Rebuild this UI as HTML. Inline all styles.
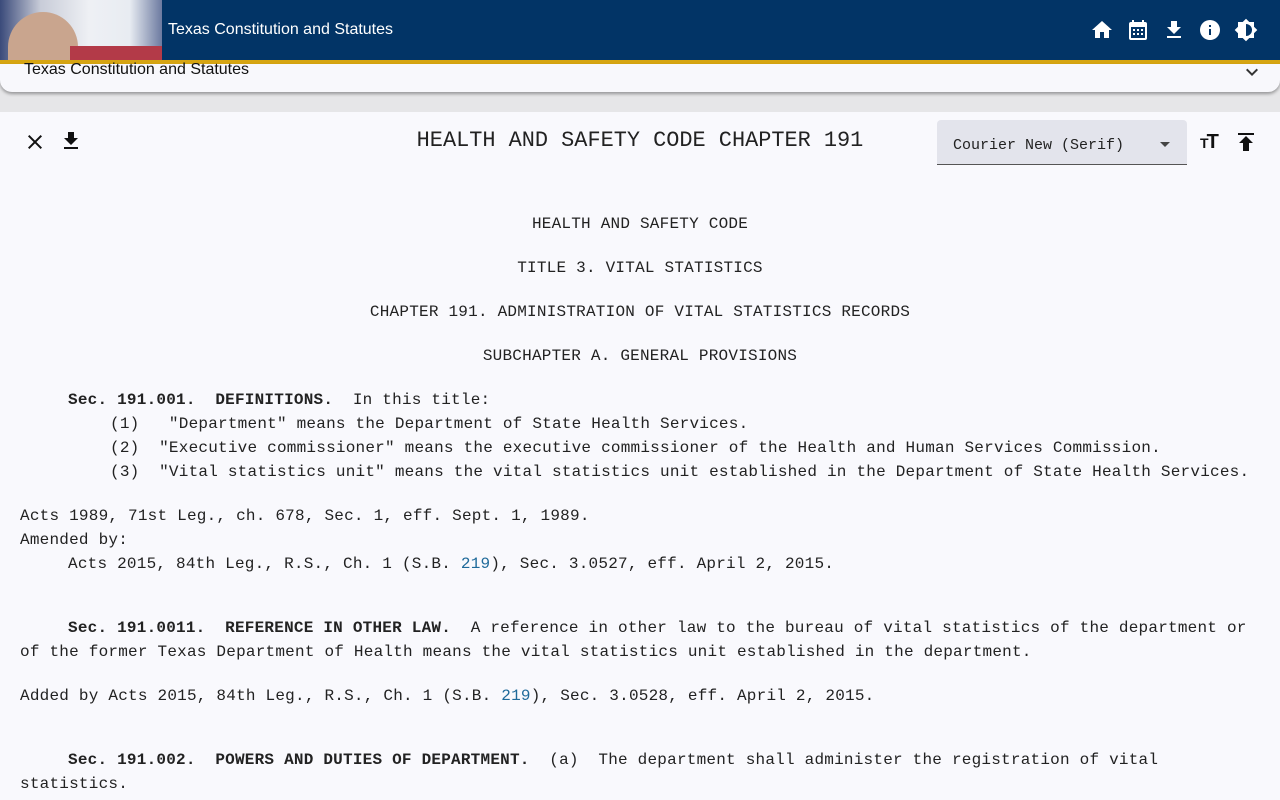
<!DOCTYPE html>
<html><head><meta charset="utf-8"><style>
*{margin:0;padding:0;box-sizing:border-box}
body{width:1280px;height:800px;overflow:hidden;background:#e6e6e8;font-family:"Liberation Sans",sans-serif;position:relative}
.hdr{position:absolute;left:0;top:0;width:1280px;height:60px;background:#023466}
.gold{position:absolute;left:0;top:60px;width:1280px;height:4px;background:#d6a512}
.img{position:absolute;left:0;top:0;width:162px;height:60px;background:linear-gradient(90deg,#3a4a7a 0,#c8ccd8 25%,#eef0f4 55%,#e8ecf2 80%,#6c7aa0 100%);overflow:hidden}
.dome{position:absolute;left:8px;top:12px;width:70px;height:60px;border-radius:35px 35px 0 0;background:#c9a58e}
.flagred{position:absolute;left:70px;top:46px;width:92px;height:14px;background:#b33a48}
.title{position:absolute;left:168px;top:21px;color:#fff;font-size:16px}
.card{position:absolute;left:0;top:64px;width:1280px;height:28px;background:#f8f8fc;border-radius:0 0 12px 12px;box-shadow:0 2px 3px rgba(0,0,0,.35)}
.card span{position:absolute;left:24px;top:-3px;font-size:16px;color:#111}
.main{position:absolute;left:0;top:112px;width:1280px;height:688px;background:#f9f9fd}
.t{position:absolute;font-family:"Courier New","Liberation Mono",monospace;font-size:16px;letter-spacing:0.22px;color:#222;white-space:pre;line-height:24px}
.c{left:0;width:1280px;text-align:center}
b{font-weight:bold}
a{color:#1f6a9a;text-decoration:none}
.sel{position:absolute;left:937px;top:120px;width:250px;height:45px;background:#e3e4ec;border-bottom:1px solid #555;border-radius:4px 4px 0 0}
.sel span{position:absolute;left:16px;top:17px;font-family:"Courier New","Liberation Mono",monospace;font-size:15px;color:#222}
svg{position:absolute}
</style></head><body>
<div class="hdr"></div>
<div class="img"><div class="dome"></div><div class="flagred"></div></div>
<div class="title">Texas Constitution and Statutes</div>
<svg style="left:1090px;top:18px" width="24" height="24" viewBox="0 0 24 24"><path fill="#fff" d="M10 20v-6h4v6h5v-8h3L12 3 2 12h3v8z"/></svg>
<svg style="left:1126px;top:18px" width="24" height="24" viewBox="0 0 24 24"><path fill="#fff" d="M19 4h-1V2h-2v2H8V2H6v2H5a2 2 0 0 0-2 2v14a2 2 0 0 0 2 2h14a2 2 0 0 0 2-2V6a2 2 0 0 0-2-2zm0 16H5V9h14zM7 11h2v2H7zm4 0h2v2h-2zm4 0h2v2h-2zM7 15h2v2H7zm4 0h2v2h-2zm4 0h2v2h-2z"/></svg>
<svg style="left:1162px;top:18px" width="24" height="24" viewBox="0 0 24 24"><path fill="#fff" d="M19 9h-4V3H9v6H5l7 7 7-7zM5 18v2h14v-2z"/></svg>
<svg style="left:1198px;top:18px" width="24" height="24" viewBox="0 0 24 24"><path fill="#fff" d="M12 2a10 10 0 1 0 0 20 10 10 0 0 0 0-20zm1 15h-2v-6h2zm0-8h-2V7h2z"/></svg>
<svg style="left:1234px;top:18px" width="24" height="24" viewBox="0 0 24 24"><path fill="#fff" d="M20 8.69V4h-4.69L12 .69 8.69 4H4v4.69L.69 12 4 15.31V20h4.69L12 23.31 15.31 20H20v-4.69L23.31 12 20 8.69zM12 18V6a6 6 0 0 1 0 12z"/></svg>
<div class="gold"></div>
<div class="card"><span>Texas Constitution and Statutes</span>
<svg style="left:1240px;top:-4px" width="24" height="24" viewBox="0 0 24 24"><path fill="#333" d="M7.4 8.6 12 13.2l4.6-4.6L18 10l-6 6-6-6z"/></svg></div>
<div class="main"></div>
<svg style="left:23px;top:130px" width="24" height="24" viewBox="0 0 24 24"><path fill="#111" d="M19 6.4 17.6 5 12 10.6 6.4 5 5 6.4 10.6 12 5 17.6 6.4 19 12 13.4 17.6 19 19 17.6 13.4 12z"/></svg>
<svg style="left:59px;top:129px" width="24" height="24" viewBox="0 0 24 24"><path fill="#111" d="M19 9h-4V3H9v6H5l7 7 7-7zM5 18v2h14v-2z"/></svg>
<div class="t c" style="top:128px;font-size:21.9px;line-height:26px;letter-spacing:0">HEALTH AND SAFETY CODE CHAPTER 191</div>
<div class="sel"><span>Courier New (Serif)</span>
<svg style="left:222px;top:19px" width="12" height="12" viewBox="0 0 12 12"><path fill="#444" d="M1 3h10L6 8z"/></svg></div>
<div style="position:absolute;left:1200px;top:131px;font:bold 20px 'Liberation Sans',sans-serif;color:#111;letter-spacing:-2px"><span style="font-size:14px">T</span>T</div>
<svg style="left:1234px;top:130px" width="24" height="24" viewBox="0 0 24 24"><path fill="#111" d="M4 3h16v2H4zm8 3-7 7h4v8h6v-8h4z"/></svg>
<div class="t c" style="top:212px">HEALTH AND SAFETY CODE</div>
<div class="t c" style="top:256px">TITLE 3. VITAL STATISTICS</div>
<div class="t c" style="top:300px">CHAPTER 191. ADMINISTRATION OF VITAL STATISTICS RECORDS</div>
<div class="t c" style="top:344px">SUBCHAPTER A. GENERAL PROVISIONS</div>
<div class="t" style="left:68px;top:388px"><b>Sec. 191.001.  DEFINITIONS.</b>  In this title:</div>
<div class="t" style="left:110px;top:412px">(1)   "Department" means the Department of State Health Services.</div>
<div class="t" style="left:110px;top:436px">(2)  "Executive commissioner" means the executive commissioner of the Health and Human Services Commission.</div>
<div class="t" style="left:110px;top:460px">(3)  "Vital statistics unit" means the vital statistics unit established in the Department of State Health Services.</div>
<div class="t" style="left:20px;top:504px">Acts 1989, 71st Leg., ch. 678, Sec. 1, eff. Sept. 1, 1989.</div>
<div class="t" style="left:20px;top:528px">Amended by:</div>
<div class="t" style="left:68px;top:552px">Acts 2015, 84th Leg., R.S., Ch. 1 (S.B. <a>219</a>), Sec. 3.0527, eff. April 2, 2015.</div>
<div class="t" style="left:68px;top:616px"><b>Sec. 191.0011.  REFERENCE IN OTHER LAW.</b>  A reference in other law to the bureau of vital statistics of the department or</div>
<div class="t" style="left:20px;top:640px">of the former Texas Department of Health means the vital statistics unit established in the department.</div>
<div class="t" style="left:20px;top:684px">Added by Acts 2015, 84th Leg., R.S., Ch. 1 (S.B. <a>219</a>), Sec. 3.0528, eff. April 2, 2015.</div>
<div class="t" style="left:68px;top:748px"><b>Sec. 191.002.  POWERS AND DUTIES OF DEPARTMENT.</b>  (a)  The department shall administer the registration of vital</div>
<div class="t" style="left:20px;top:772px">statistics.</div>
</body></html>
